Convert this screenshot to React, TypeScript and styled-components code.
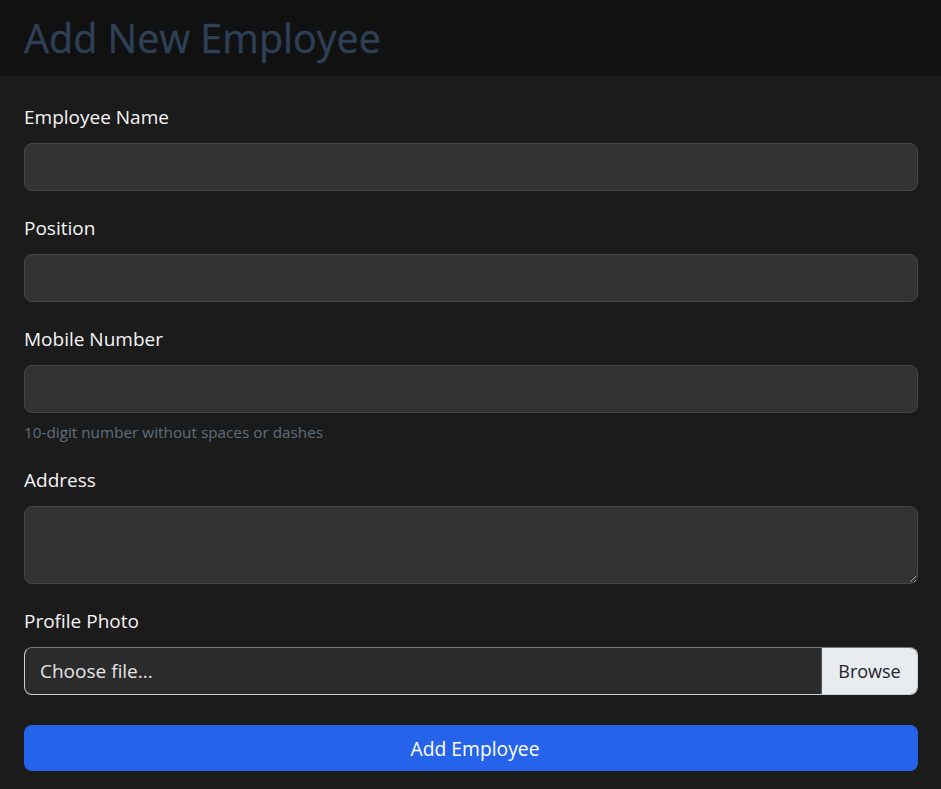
import React from "react";
import styled, { createGlobalStyle } from "styled-components";

const Global = createGlobalStyle`
  html, body { margin: 0; padding: 0; background: #1b1b1b; }
  body { font-family: "Open Sans", "Noto Sans", sans-serif; color: #f1f1f1; }
  * { box-sizing: border-box; }
`;

const Page = styled.div`
  min-height: 789px;
  background: #1b1b1b;
`;

const Header = styled.header`
  height: 76px;
  background: #111111;
  padding: 0 24px;
  display: flex;
  align-items: center;
`;

const Title = styled.h1`
  margin: 0;
  font-size: 39.5px;
  font-weight: 500;
  color: #2d4055;
  line-height: 1;
  padding-top: 1px;
  -webkit-text-stroke: 0.4px #2d4055;
`;

const Form = styled.form`
  padding: 28px 23px 0 24px;
  display: flex;
  flex-direction: column;
`;

const Group = styled.div`
  display: flex;
  flex-direction: column;
  margin-bottom: 24px;
`;

const Label = styled.label`
  font-size: 19px;
  line-height: 27px;
  color: #f5f5f5;
  margin-bottom: 12px;
`;

const Input = styled.input`
  height: 48px;
  width: 100%;
  background: #333333;
  border: 1px solid #464646;
  border-radius: 8px;
  color: #eee;
  font-size: 16px;
  padding: 0 16px;
  font-family: inherit;
  outline: none;
`;

const TextArea = styled.textarea`
  height: 78px;
  width: 100%;
  background: #333333;
  border: 1px solid #464646;
  border-radius: 8px;
  color: #eee;
  font-size: 16px;
  padding: 10px 16px;
  font-family: inherit;
  resize: vertical;
  outline: none;
  display: block;
`;

const Help = styled.small`
  margin-top: 9px;
  font-size: 15.3px;
  line-height: 21px;
  color: #5f6f7f;
`;

const FileBox = styled.label`
  height: 48px;
  display: flex;
  border: 1px solid;
  border-color: #777 #cfcfcf #cfcfcf #cfcfcf;
  border-radius: 8px;
  overflow: hidden;
  background: #2b2b2b;
  cursor: pointer;
`;

const FileText = styled.span`
  flex: 1;
  display: flex;
  align-items: center;
  padding: 0 15px;
  font-size: 19px;
  color: #e6e6e6;
`;

const Browse = styled.span`
  width: 96px;
  display: flex;
  align-items: center;
  justify-content: center;
  background: #e9ecef;
  color: #212529;
  font-size: 18px;
  border-left: 1px solid #555;
`;

const Submit = styled.button`
  margin-top: 6px;
  height: 46px;
  width: 100%;
  border: none;
  border-radius: 8px;
  background: #2563eb;
  color: #ffffff;
  font-size: 19.3px;
  font-family: inherit;
  cursor: pointer;
  padding: 0 0 0 8px;
`;

export default function App() {
  return (
    <Page>
      <Global />
      <Header>
        <Title>Add New Employee</Title>
      </Header>
      <Form onSubmit={(e) => e.preventDefault()}>
        <Group>
          <Label>Employee Name</Label>
          <Input type="text" />
        </Group>
        <Group>
          <Label>Position</Label>
          <Input type="text" />
        </Group>
        <Group>
          <Label>Mobile Number</Label>
          <Input type="tel" />
          <Help>10-digit number without spaces or dashes</Help>
        </Group>
        <Group>
          <Label>Address</Label>
          <TextArea />
        </Group>
        <Group>
          <Label>Profile Photo</Label>
          <FileBox>
            <FileText>Choose file...</FileText>
            <Browse>Browse</Browse>
          </FileBox>
        </Group>
        <Submit type="submit">Add Employee</Submit>
      </Form>
    </Page>
  );
}
